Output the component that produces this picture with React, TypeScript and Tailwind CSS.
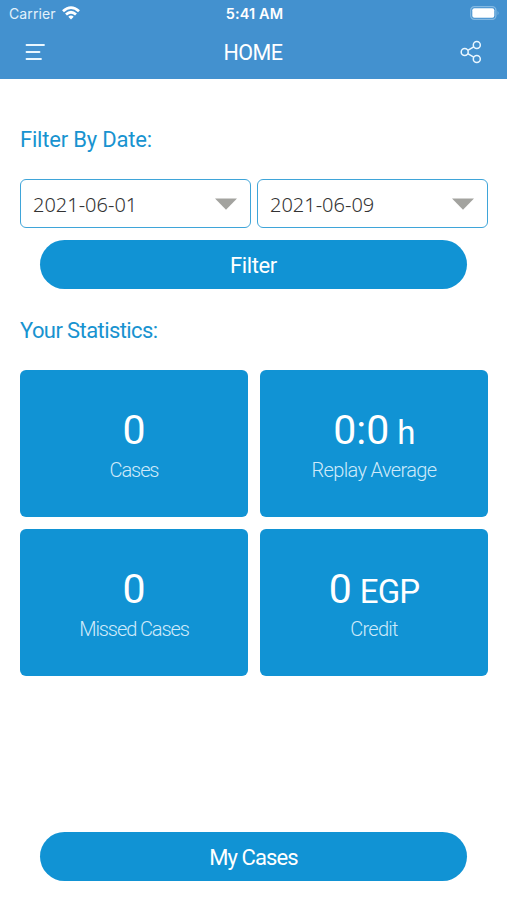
import React from "react";

function DateField({ value }: { value: string }) {
  return (
    <button className="flex h-[49px] flex-1 items-center justify-between rounded-[6px] border-[1.5px] border-[#3fa5d9] bg-white pr-[13px] pl-[12px]">
      <span className="pt-[2px] font-['Noto_Sans',sans-serif] text-[20px] leading-none font-light text-[#333333]">{value}</span>
      <svg width="22" height="12" viewBox="0 0 22 12" className="fill-[#a3a39f]">
        <path d="M0 0.5H22L11 11.8Z" />
      </svg>
    </button>
  );
}

function Pill({ label, tracking }: { label: string; tracking: string }) {
  return (
    <button className={`mx-[40px] flex h-[49px] items-center justify-center rounded-full bg-[#1193d4] pt-[2px] text-[22px] leading-none text-white ${tracking}`}>
      {label}
    </button>
  );
}

function Stat({ value, unit, label, tracking }: { value: string; unit?: string; label: string; tracking: string }) {
  return (
    <div className="flex h-[147px] flex-col items-center rounded-[6px] bg-[#1193d4] pt-[39px] text-white">
      <div className="flex h-[42px] items-baseline gap-[8px] text-[41px] leading-[42px]">
        <span>{value}</span>
        {unit && <span className="text-[33px] tracking-[-0.8px]">{unit}</span>}
      </div>
      <div className={`mt-[7px] text-[20px] leading-[24px] font-light text-[#cfeafa] ${tracking}`}>{label}</div>
    </div>
  );
}

export default function App() {
  return (
    <div className="flex h-[900px] w-[507px] flex-col bg-white font-[Roboto,sans-serif]">
      <header className="h-[79px] bg-[#4391cf] text-white">
        <div className="grid h-[28px] grid-cols-3 items-center pr-[7px] pl-[9px] font-[Inter,sans-serif] text-[14px] leading-none">
          <div className="flex items-center gap-[6px] text-[#e3f1fb]">
            <span className="tracking-[0.1px]">Carrier</span>
            <svg className="-mt-[2px]" width="18" height="14" viewBox="0 0 18 14" fill="none" stroke="white" strokeWidth="2.8">
              <path d="M1 5.2Q9 -2 17 5.2M4 8.5Q9 4 14 8.5" />
              <path d="M6.3 10.7Q9 8.3 11.7 10.7L9 13.6Z" fill="white" stroke="none" />
            </svg>
          </div>
          <span className="text-center text-[14.5px] font-semibold tracking-[0.15px]">5:41 AM</span>
          <svg className="-mt-[2px] justify-self-end" width="30" height="14" viewBox="0 0 30 14">
            <rect x="0.7" y="0.7" width="25.2" height="12.6" rx="3.6" fill="none" stroke="#83b9e2" strokeWidth="1.2" />
            <rect x="2.3" y="2.3" width="22" height="9.4" rx="2" fill="white" />
            <path d="M27.6 4.7Q29.5 7 27.6 9.3Z" fill="#83b9e2" />
          </svg>
        </div>
        <div className="flex h-[48px] items-center justify-between pr-[25px] pl-[25px]">
          <svg width="21" height="18" viewBox="0 0 21 18" stroke="#eaf7ff" strokeWidth="1.8" strokeLinecap="round">
            <path d="M1.5 2H19M1.5 9H14.5M1.5 16H16" />
          </svg>
          <h1 className="pt-[2px] text-[21.5px] leading-none tracking-[-0.5px]">HOME</h1>
          <svg width="22" height="24" viewBox="0 0 22 24" fill="none" stroke="#eaf7ff" strokeWidth="1.5">
            <circle cx="4.7" cy="12" r="3.5" />
            <circle cx="16.8" cy="5" r="3.5" />
            <circle cx="16.8" cy="19" r="3.5" />
            <path d="M7.8 10.3L13.7 6.8M7.8 13.7L13.7 17.2" />
          </svg>
        </div>
      </header>
      <main className="flex flex-1 flex-col">
        <h2 className="mt-[46px] ml-[20px] text-[22px] leading-[30px] tracking-[-0.2px] text-[#1893d0]">Filter By Date:</h2>
        <div className="mt-[24px] flex gap-[6px] pr-[19px] pl-[20px]">
          <DateField value="2021-06-01" />
          <DateField value="2021-06-09" />
        </div>
        <div className="mt-[12px] flex flex-col">
          <Pill label="Filter" tracking="tracking-[-0.4px]" />
        </div>
        <h2 className="mt-[27px] ml-[20px] text-[22px] leading-[30px] tracking-[-0.6px] text-[#1893d0]">Your Statistics:</h2>
        <div className="mt-[24px] grid grid-cols-2 gap-[12px] pr-[19px] pl-[20px]">
          <Stat value="0" label="Cases" tracking="tracking-[-1.1px]" />
          <Stat value="0:0" unit="h" label="Replay Average" tracking="tracking-[-0.65px]" />
          <Stat value="0" label="Missed Cases" tracking="tracking-[-1.1px]" />
          <Stat value="0" unit="EGP" label="Credit" tracking="tracking-[-0.7px]" />
        </div>
        <div className="mt-auto mb-[19px] flex flex-col">
          <Pill label="My Cases" tracking="tracking-[-0.9px]" />
        </div>
      </main>
    </div>
  );
}
